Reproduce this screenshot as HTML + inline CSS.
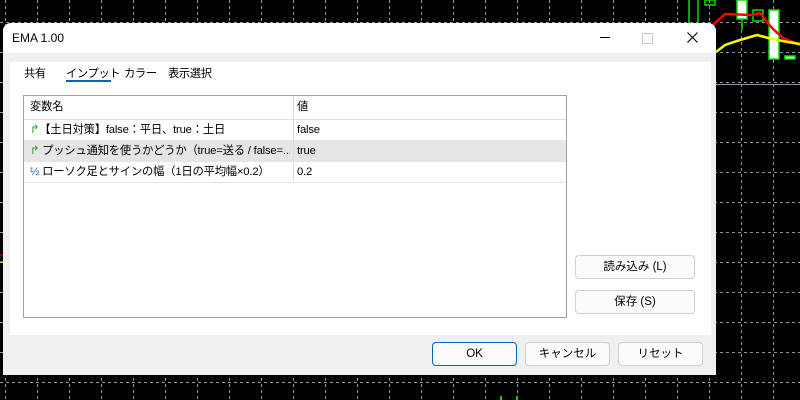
<!DOCTYPE html>
<html><head><meta charset="utf-8"><style>
body{margin:0;width:800px;height:400px;overflow:hidden;background:#000;font-family:"Liberation Sans","Noto Sans CJK JP",sans-serif;font-size:12px;color:#000;position:relative}
svg.bg{position:absolute;left:0;top:0}
.dlg{position:absolute;left:3px;top:23px;width:713px;height:352px;background:#f0f0f0;border-radius:8px 8px 0 0;overflow:hidden}
.tb{position:absolute;left:0;top:0;width:713px;height:30px;background:#fff}
.title{position:absolute;left:9px;top:8px;font-size:12px}
.panel{position:absolute;left:7px;top:39px;width:701px;height:273px;background:#fff}
.tab{position:absolute;top:42px;font-size:11.3px;letter-spacing:-0.4px;white-space:nowrap}
.ul{position:absolute;left:63px;top:57px;width:45px;height:2px;background:#0067c0}
.tbl{position:absolute;left:20px;top:72px;width:542px;height:221px;border:1px solid #a0a0a0;background:#fff}
.row{position:absolute;left:0;width:542px;height:20px;border-bottom:1px solid #e6e6e6;line-height:20px;font-size:11.3px;letter-spacing:-0.2px}
.c1{position:absolute;left:6px;top:0;width:260px;overflow:hidden;white-space:nowrap}
.c2{position:absolute;left:273px;top:0}
.div{position:absolute;left:269px;top:0;width:1px;height:85px;background:#dcdcdc}
.btn{position:absolute;height:22px;border:1px solid #d0d0d0;border-radius:4px;background:#fbfbfb;text-align:center;line-height:22px;font-size:11.5px}
</style></head><body>
<svg class="bg" width="800" height="400">
<g stroke="#8a96a8" stroke-dasharray="3,3" stroke-width="1">
<line x1="0" y1="22.5" x2="800" y2="22.5"/><line x1="0" y1="52.5" x2="800" y2="52.5"/><line x1="0" y1="82.5" x2="800" y2="82.5"/><line x1="0" y1="112.5" x2="800" y2="112.5"/><line x1="0" y1="142.5" x2="800" y2="142.5"/><line x1="0" y1="172.5" x2="800" y2="172.5"/><line x1="0" y1="202.5" x2="800" y2="202.5"/><line x1="0" y1="232.5" x2="800" y2="232.5"/><line x1="0" y1="262.5" x2="800" y2="262.5"/><line x1="0" y1="292.5" x2="800" y2="292.5"/><line x1="0" y1="322.5" x2="800" y2="322.5"/><line x1="0" y1="352.5" x2="800" y2="352.5"/><line x1="0" y1="382.5" x2="800" y2="382.5"/>
<line x1="5.5" y1="0" x2="5.5" y2="400"/><line x1="37.5" y1="0" x2="37.5" y2="400"/><line x1="69.5" y1="0" x2="69.5" y2="400"/><line x1="101.5" y1="0" x2="101.5" y2="400"/><line x1="133.5" y1="0" x2="133.5" y2="400"/><line x1="165.5" y1="0" x2="165.5" y2="400"/><line x1="197.5" y1="0" x2="197.5" y2="400"/><line x1="229.5" y1="0" x2="229.5" y2="400"/><line x1="261.5" y1="0" x2="261.5" y2="400"/><line x1="293.5" y1="0" x2="293.5" y2="400"/><line x1="325.5" y1="0" x2="325.5" y2="400"/><line x1="357.5" y1="0" x2="357.5" y2="400"/><line x1="389.5" y1="0" x2="389.5" y2="400"/><line x1="421.5" y1="0" x2="421.5" y2="400"/><line x1="453.5" y1="0" x2="453.5" y2="400"/><line x1="485.5" y1="0" x2="485.5" y2="400"/><line x1="517.5" y1="0" x2="517.5" y2="400"/><line x1="549.5" y1="0" x2="549.5" y2="400"/><line x1="581.5" y1="0" x2="581.5" y2="400"/><line x1="613.5" y1="0" x2="613.5" y2="400"/><line x1="645.5" y1="0" x2="645.5" y2="400"/><line x1="677.5" y1="0" x2="677.5" y2="400"/><line x1="709.5" y1="0" x2="709.5" y2="400"/><line x1="741.5" y1="0" x2="741.5" y2="400"/><line x1="773.5" y1="0" x2="773.5" y2="400"/>
</g>
<line x1="716" y1="84.5" x2="800" y2="84.5" stroke="#8a96a8"/>
<g stroke="#00e000" stroke-width="1.5" fill="#fff">
<line x1="689" y1="0" x2="689" y2="25"/><line x1="698" y1="0" x2="698" y2="25"/>
<rect x="705" y="0" width="10" height="5" fill="none"/>
<rect x="737" y="0" width="10" height="19"/><line x1="742" y1="19" x2="742" y2="30"/>
<rect x="753" y="10" width="10" height="11" fill="none"/>
<rect x="769" y="10" width="10" height="49"/>
<rect x="785" y="56" width="10" height="3"/>
</g>
<polyline points="712,26 725,14 752,15 760,13 772,28 783,38 800,45" fill="none" stroke="#f00" stroke-width="2.5"/>
<polyline points="716,52 725,45 740,40 757,35 772,39 788,42 800,44" fill="none" stroke="#ff0" stroke-width="2.5"/>
<line x1="0" y1="255" x2="3" y2="255" stroke="#f00"/>
<line x1="0" y1="262" x2="3" y2="262" stroke="#ff0"/>
<line x1="501" y1="396" x2="501" y2="400" stroke="#00e000" stroke-width="2"/><line x1="517" y1="396" x2="517" y2="400" stroke="#00e000" stroke-width="2"/>
</svg>
<div class="dlg">
<div class="tb"></div>
<div class="title">EMA 1.00</div>
<div style="position:absolute;left:597px;top:14px;width:10px;height:1px;background:#000"></div>
<div style="position:absolute;left:639px;top:10px;width:9px;height:9px;border:1px solid #c8c8c8"></div>
<svg style="position:absolute;left:684px;top:9px" width="11" height="11"><path d="M0.5 0.5L10.5 10.5M10.5 0.5L0.5 10.5" stroke="#000" stroke-width="1.1"/></svg>
<div class="panel"></div>
<div class="tab" style="left:21px">共有</div>
<div class="tab" style="left:63px">インプット</div>
<div class="tab" style="left:121px">カラー</div>
<div class="tab" style="left:165px">表示選択</div>
<div class="ul"></div>
<div class="tbl">
<div class="row" style="top:0;height:23px;line-height:23px;border-bottom:1px solid #e0e0e0"><span class="c1">変数名</span><span class="c2">値</span></div>
<div class="row" style="top:24px"><span class="c1"><span style="color:#2a9a2a">↱</span>【土日対策】false：平日、true：土日</span><span class="c2">false</span></div>
<div class="row" style="top:45px;background:#e5e5e5"><span class="c1"><span style="color:#2a9a2a">↱</span> プッシュ通知を使うかどうか（true=送る / false=...</span><span class="c2">true</span></div>
<div class="row" style="top:66px"><span class="c1"><span style="color:#1a5fb0">½</span> ローソク足とサインの幅（1日の平均幅×0.2）</span><span class="c2">0.2</span></div>
<div class="div"></div>
</div>
<div class="btn" style="left:572px;top:232px;width:118px">読み込み (L)</div>
<div class="btn" style="left:572px;top:267px;width:118px">保存 (S)</div>
<div class="btn" style="left:429px;top:319px;width:83px;border-color:#0067c0">OK</div>
<div class="btn" style="left:522px;top:319px;width:83px">キャンセル</div>
<div class="btn" style="left:615px;top:319px;width:83px">リセット</div>
</div>
</body></html>
